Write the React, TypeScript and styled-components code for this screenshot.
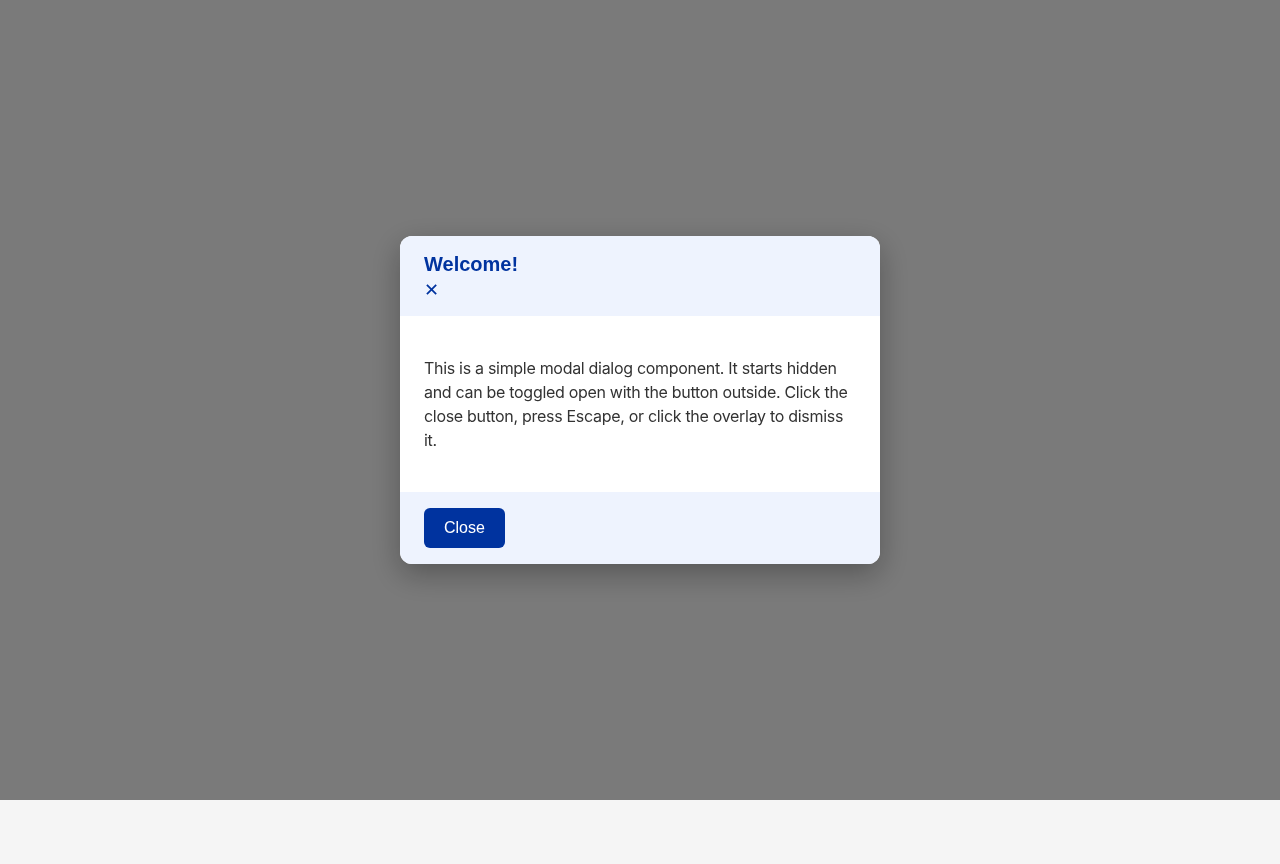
import React from "react";
import styled, { createGlobalStyle } from "styled-components";

const Global = createGlobalStyle`
  html, body { margin: 0; padding: 0; background: #f5f5f5; }
  body {
    font-family: Inter, "Noto Sans", sans-serif;
    height: 864px;
  }
`;

const Overlay = styled.div`
  position: fixed;
  left: 0;
  top: 0;
  width: 100%;
  height: 800px;
  background: rgba(0, 0, 0, 0.5);
  display: flex;
  align-items: center;
  justify-content: center;
`;

const Dialog = styled.div`
  width: 480px;
  background: #ffffff;
  border-radius: 12px;
  overflow: hidden;
  box-shadow: 0 10px 30px rgba(0, 0, 0, 0.3);
`;

const Header = styled.div`
  background: #eef3fe;
  padding: 16px 24px;
`;

const Title = styled.h2`
  margin: 0;
  font-family: "Liberation Sans", Arial, sans-serif;
  font-size: 20px;
  line-height: 24px;
  font-weight: 700;
  color: #00339f;
`;

const CloseX = styled.button`
  display: block;
  margin: 0;
  padding: 4px 0 0;
  border: none;
  background: none;
  color: #00339f;
  font-family: "DejaVu Sans", sans-serif;
  font-size: 18px;
  font-weight: 700;
  line-height: 20px;
  height: 24px;
  cursor: pointer;
`;

const Body = styled.div`
  padding: 24px;
  color: #333333;
`;

const Text = styled.p`
  margin: 16px 0;
  font-size: 16px;
  line-height: 24px;
  letter-spacing: -0.3px;
`;

const Footer = styled.div`
  background: #eef3fe;
  padding: 16px 24px;
  display: flex;
`;

const Button = styled.button`
  height: 40px;
  padding: 0 20px;
  border: none;
  border-radius: 6px;
  background: #00339f;
  color: #ffffff;
  font-family: "Liberation Sans", Arial, sans-serif;
  font-size: 16px;
  line-height: 40px;
  cursor: pointer;
`;

export default function App() {
  return (
    <>
      <Global />
      <Overlay>
        <Dialog role="dialog" aria-modal="true">
          <Header>
            <Title>Welcome!</Title>
            <CloseX aria-label="Close">✕</CloseX>
          </Header>
          <Body>
            <Text>
              This is a simple modal dialog component. It starts hidden and can
              be toggled open with the button outside. Click the close button,
              press Escape, or click the overlay to dismiss it.
            </Text>
          </Body>
          <Footer>
            <Button>Close</Button>
          </Footer>
        </Dialog>
      </Overlay>
    </>
  );
}
